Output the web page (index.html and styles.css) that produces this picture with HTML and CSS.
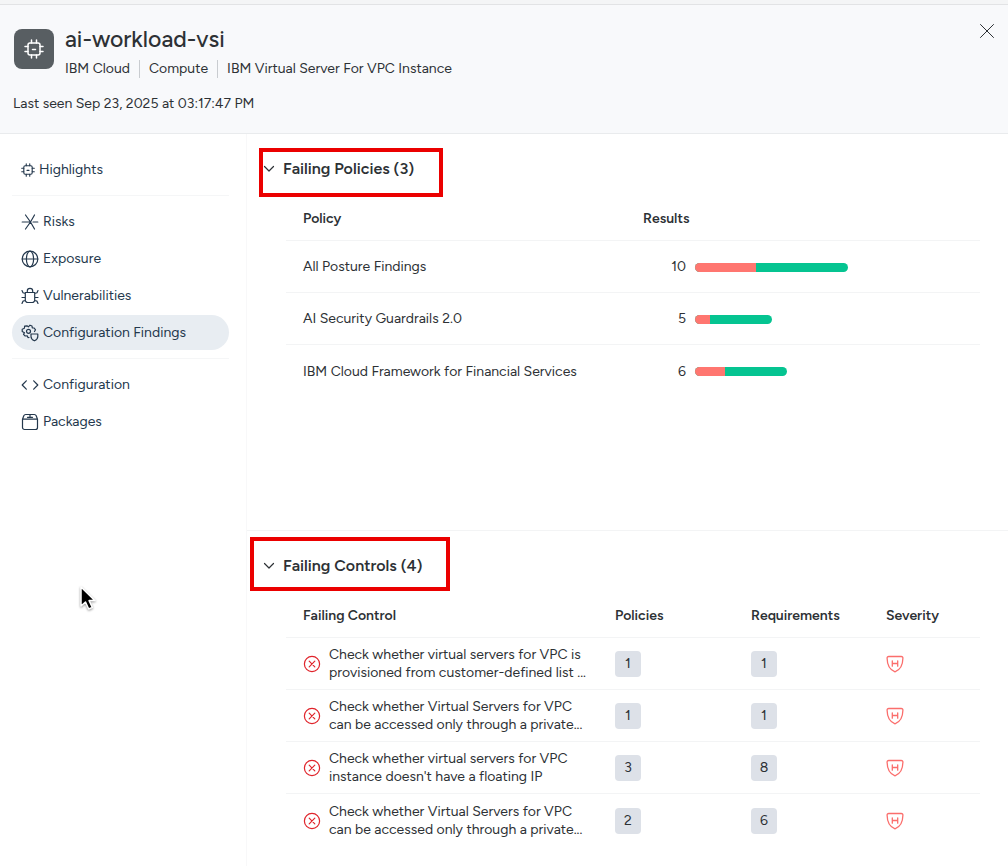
FILE: index.html
```
<!DOCTYPE html>
<html lang="en">
<head>
<meta charset="utf-8">
<meta name="viewport" content="width=device-width, initial-scale=1">
<title>ai-workload-vsi</title>
<link rel="stylesheet" href="styles.css">
</head>
<body>
<svg class="sprite" aria-hidden="true">
  <symbol id="chip" viewBox="0 0 20 20">
    <rect x="4" y="4" width="12" height="12" rx="2"/>
    <path d="M7.500 1v3M12.500 1v3M7.500 16v3M12.500 16v3M1 7.500h3M1 12.500h3M16 7.500h3M16 12.500h3M8.500 10.500h3"/>
  </symbol>
  <symbol id="fail" viewBox="0 0 18 18">
    <circle cx="9" cy="9" r="7.600"/>
    <path d="M6.200 6.200l5.600 5.600M11.800 6.200l-5.600 5.600"/>
  </symbol>
  <symbol id="shield-high" viewBox="0 0 18 18">
    <path d="M2.800 1.500h12.400q1.800 0 1.700 1.800c-.1 6.500-1.600 11.300-7.900 13.500C2.700 14.600 1.200 9.800 1.100 3.300q-.1-1.800 1.700-1.800z"/>
    <path d="M6.300 5.800v5.400M11.700 5.800v5.400M6.300 8.500h5.400"/>
  </symbol>
  <symbol id="chevron" viewBox="0 0 12 12">
    <path d="M1.500 3.500L6 8l4.500-4.500"/>
  </symbol>
</svg>

<header class="header">
  <div class="identity">
    <span class="avatar"><svg class="avatar-icon"><use href="#chip"/></svg></span>
    <div class="identity-text">
      <h1 class="title">ai-workload-vsi</h1>
      <ul class="crumbs">
        <li>IBM Cloud</li>
        <li>Compute</li>
        <li>IBM Virtual Server For VPC Instance</li>
      </ul>
    </div>
    <button class="close" type="button" aria-label="Close">
      <svg class="close-icon" viewBox="0 0 16 16"><path d="M1.500 1.500l13 13M14.500 1.500l-13 13"/></svg>
    </button>
  </div>
  <p class="seen">Last seen Sep 23, 2025 at 03:17:47 PM</p>
</header>

<div class="body">
  <nav class="sidebar" aria-label="Asset sections">
    <a class="nav-item" href="#highlights"><svg class="nav-icon nav-icon-small"><use href="#chip"/></svg>Highlights</a>
    <hr class="nav-divider">
    <a class="nav-item" href="#risks"><svg class="nav-icon" viewBox="0 0 18 18"><path d="M1.200 9H7M12 9h4.800M4.500 2L9.500 9l-5 7M13.500 2l-4 7 4 7M7 9h2"/></svg>Risks</a>
    <a class="nav-item" href="#exposure"><svg class="nav-icon" viewBox="0 0 18 18"><circle cx="9" cy="9" r="7.800"/><ellipse cx="9" cy="9" rx="3.600" ry="7.800"/><path d="M1.200 9h15.600"/></svg>Exposure</a>
    <a class="nav-item" href="#vulnerabilities"><svg class="nav-icon" viewBox="0 0 18 18"><path d="M4.300 5.500h9.400V13a2.500 2.500 0 0 1-2.500 2.500H6.800A2.500 2.500 0 0 1 4.300 13zM6.300 5.500V4a2.700 2.700 0 0 1 5.400 0v1.500M1 3.500l1 2.300 2.300.7M17 3.500l-1 2.300-2.300.7M1 10.500h3.300M13.700 10.500H17M1 16.500l1-2.300 2.500-.7M17 16.500l-1-2.300-2.500-.7"/></svg>Vulnerabilities</a>
    <a class="nav-item nav-item-active" href="#findings" aria-current="page"><svg class="nav-icon" viewBox="0 0 18 18"><path d="M8 13.500l-1 .1-.8-1.800-2 .2L2.500 10.300l1-1.600L1.200 7.500V5.200l2.200-.9L3.600 2.200 6 1.800l1.400 1.100L9 1.200l2 .8.300 1.900 1.900.1 1.300 1.800-1 1.700"/><circle cx="7.500" cy="7.300" r="2"/><path d="M10 10h6.800v2.500c0 2-1.200 3.400-3.400 4.300-2.200-.9-3.400-2.300-3.400-4.300z"/></svg>Configuration Findings</a>
    <hr class="nav-divider">
    <a class="nav-item" href="#configuration"><svg class="nav-icon" viewBox="0 0 18 18"><path d="M5.300 4.800L1.200 9l4.100 4.200M12.700 4.800L16.800 9l-4.100 4.200"/></svg>Configuration</a>
    <a class="nav-item" href="#packages"><svg class="nav-icon" viewBox="0 0 18 18"><path d="M1.500 6.200h15V14.500a2 2 0 0 1-2 2h-11a2 2 0 0 1-2-2zM1.500 6.200l1.300-3.400q.5-1.300 1.900-1.300h8.600q1.400 0 1.900 1.300l1.300 3.400M6.500 4.300h5M9 1.500v2.800"/></svg>Packages</a>
  </nav>

  <main class="content">
    <section class="section section-policies">
      <h2 class="section-heading">
        <button class="toggle" type="button" aria-expanded="true"><svg class="chevron"><use href="#chevron"/></svg>Failing Policies (3)</button>
      </h2>
      <table class="table">
        <thead><tr><th class="col-policy">Policy</th><th>Results</th></tr></thead>
        <tbody>
          <tr><td>All Posture Findings</td><td><div class="result"><span class="result-count">10</span><span class="bar" style="width:153px"><span class="bar-fail" style="width:40%"></span></span></div></td></tr>
          <tr><td>AI Security Guardrails 2.0</td><td><div class="result"><span class="result-count">5</span><span class="bar" style="width:77px"><span class="bar-fail" style="width:20%"></span></span></div></td></tr>
          <tr><td>IBM Cloud Framework for Financial Services</td><td><div class="result"><span class="result-count">6</span><span class="bar" style="width:92px"><span class="bar-fail" style="width:33%"></span></span></div></td></tr>
        </tbody>
      </table>
    </section>

    <section class="section section-controls">
      <h2 class="section-heading">
        <button class="toggle" type="button" aria-expanded="true"><svg class="chevron"><use href="#chevron"/></svg>Failing Controls (4)</button>
      </h2>
      <table class="table">
        <thead><tr><th>Failing Control</th><th class="col-policies">Policies</th><th class="col-requirements">Requirements</th><th class="col-severity">Severity</th></tr></thead>
        <tbody>
          <tr><td><div class="control"><svg class="fail-icon"><use href="#fail"/></svg><span>Check whether virtual servers for VPC is<br>provisioned from customer-defined list ...</span></div></td><td><span class="count">1</span></td><td><span class="count">1</span></td><td><svg class="severity" role="img" aria-label="High"><use href="#shield-high"/></svg></td></tr>
          <tr><td><div class="control"><svg class="fail-icon"><use href="#fail"/></svg><span>Check whether Virtual Servers for VPC<br>can be accessed only through a private...</span></div></td><td><span class="count">1</span></td><td><span class="count">1</span></td><td><svg class="severity" role="img" aria-label="High"><use href="#shield-high"/></svg></td></tr>
          <tr><td><div class="control"><svg class="fail-icon"><use href="#fail"/></svg><span>Check whether virtual servers for VPC<br>instance doesn't have a floating IP</span></div></td><td><span class="count">3</span></td><td><span class="count">8</span></td><td><svg class="severity" role="img" aria-label="High"><use href="#shield-high"/></svg></td></tr>
          <tr><td><div class="control"><svg class="fail-icon"><use href="#fail"/></svg><span>Check whether Virtual Servers for VPC<br>can be accessed only through a private...</span></div></td><td><span class="count">2</span></td><td><span class="count">6</span></td><td><svg class="severity" role="img" aria-label="High"><use href="#shield-high"/></svg></td></tr>
        </tbody>
      </table>
    </section>
  </main>
</div>
<svg class="cursor" viewBox="0 0 18 26" aria-hidden="true"><path d="M2 2v19l4.500-4 3.200 7 3.600-1.600-3.200-6.800H16z"/></svg>
</body>
</html>
```
FILE: styles.css
```
* { box-sizing: border-box; }

body {
  margin: 0;
  min-height: 100vh;
  display: flex;
  flex-direction: column;
  background: #fff;
  color: #2d3135;
  font: 14px/18px Figtree, Inter, "Open Sans", sans-serif;
}

svg {
  display: block;
  flex: none;
  fill: none;
  stroke: currentColor;
  stroke-linecap: round;
  stroke-linejoin: round;
}

button {
  border: 0;
  padding: 0;
  background: none;
  color: inherit;
  font: inherit;
  cursor: pointer;
}

.sprite { position: absolute; width: 0; height: 0; }

.header {
  border-top: 4px solid #f4f5f6;
  border-bottom: 1px solid #e9ebed;
  padding: 0 12px 20px 13px;
  background: #f8f9fb;
  box-shadow: inset 0 1px #e2e3e5;
}

.identity { display: flex; padding-top: 22px; }

.avatar {
  display: grid;
  place-items: center;
  width: 40px;
  height: 40px;
  margin: 3px 11px 0 1px;
  border-radius: 8px;
  background: #585e62;
  color: #fff;
}

.avatar-icon { width: 20px; height: 20px; stroke-width: 1.5; }

.identity-text { flex: 1; }

.title { margin: 0; font-size: 23px; line-height: 26px; font-weight: 500; }

.crumbs { display: flex; margin: 8px 0 0; padding: 0; list-style: none; }
.crumbs li + li { margin-left: 9px; border-left: 1px solid #c9ccd0; padding-left: 9px; }

.close {
  width: 16px;
  height: 16px;
  margin: -3px 1px 0 0;
  align-self: flex-start;
}

.close-icon { width: 16px; height: 16px; }

.seen { margin: 17px 0 0; }

.body { display: flex; flex: 1; }

.sidebar {
  flex: none;
  width: 247px;
  padding: 18px 17px 0 12px;
  border-right: 1px solid #f8f8f9;
}

.nav-item {
  display: flex;
  align-items: center;
  gap: 4px;
  height: 35px;
  margin-bottom: 2px;
  padding-left: 9px;
  border-radius: 18px;
  color: #24384d;
  text-decoration: none;
}

.nav-item-active { background: #e8edf2; }
.nav-icon { width: 18px; height: 18px; stroke-width: 1.2; }
.nav-icon-small { width: 14px; height: 14px; stroke-width: 1.6; }

.nav-divider { margin: 8px 0; border: 0; border-top: 1px solid #f5f6f7; }

.content { flex: 1; min-width: 0; }

.section { padding: 6px 28px 0 39px; }
.section-policies { padding-bottom: 133px; border-bottom: 1px solid #f3f4f5; }

.section-heading {
  display: flex;
  align-items: center;
  height: 58px;
  margin: 0 0 0 -23px;
  font-size: 16px;
  line-height: 20px;
  font-weight: 600;
}

.toggle { position: relative; display: flex; align-items: center; gap: 8px; }
.chevron { width: 12px; height: 12px; stroke-width: 1.2; }

.toggle::after { content: ""; position: absolute; border: 4px solid #eb0000; }
.section-policies .toggle::after { inset: -11px -29px -18px -4px; }
.section-controls .toggle::after { inset: -19px -27px -15px -13px; }

.table { width: 100%; border-collapse: separate; border-spacing: 0; table-layout: fixed; }

th, td { padding: 0 0 0 17px; text-align: left; vertical-align: middle; }
th { height: 43px; font-weight: 600; border-bottom: 1px solid #f3f4f5; }
td { height: 52px; padding-top: 1px; border-bottom: 1px solid #f3f4f5; }
tbody tr:last-child td { border-bottom: 0; }

.col-policy { width: 49%; }
.col-policies { width: 136px; }
.col-requirements { width: 135px; }
.col-severity { width: 111px; }

.result { display: flex; align-items: center; gap: 9px; }
.result-count { width: 43px; text-align: right; }
.bar { height: 9px; border-radius: 5px; overflow: hidden; background: #05c491; }
.bar-fail { display: block; height: 100%; background: #ff7670; }

.control { display: flex; align-items: center; gap: 8px; white-space: nowrap; }
.fail-icon { width: 18px; height: 18px; color: #e0242b; stroke-width: 1.2; }

.count {
  display: grid;
  place-items: center;
  width: 26px;
  height: 26px;
  border-radius: 4px;
  background: #dde1e8;
}

.severity { width: 18px; height: 18px; color: #fb6e6c; stroke-width: 1.3; }

.cursor {
  position: absolute;
  left: 79px;
  top: 585px;
  width: 18px;
  height: 26px;
  fill: #000;
  stroke: #fff;
  stroke-width: 1.5;
  filter: drop-shadow(0 1px 1px rgb(0 0 0 / 40%));
}
```
